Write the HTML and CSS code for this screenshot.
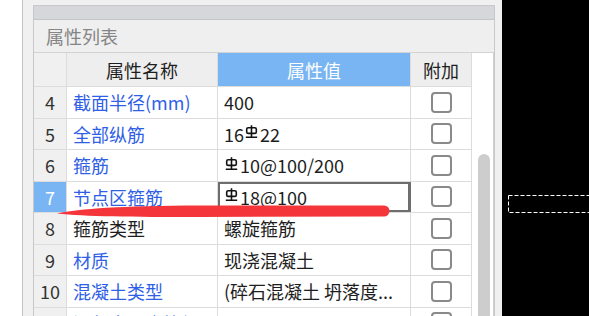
FILE: index.html
```html
<!DOCTYPE html>
<html>
<head>
    <link rel="stylesheet" href="styles.css">
</head>
<body>
    <div class="screen">
        <div class="gap-left"></div>
        <div class="dock">
            <div class="panel">
                <div class="panel-bar"></div>
                <div class="panel-title">属性列表</div>
                <div class="panel-body">
                    <div class="grid">
                        <div class="row head">
                            <div class="cell num"></div>
                            <div class="cell center">属性名称</div>
                            <div class="cell center active">属性值</div>
                            <div class="cell center">附加</div>
                        </div>
                        <div class="row">
                            <div class="cell num">4</div>
                            <div class="cell name link">截面半径(mm)</div>
                            <div class="cell value">400</div>
                            <div class="cell check"><span class="box"></span></div>
                        </div>
                        <div class="row">
                            <div class="cell num">5</div>
                            <div class="cell name link">全部纵筋</div>
                            <div class="cell value">16<svg class="steel" viewBox="0 0 13 13"><path d="M6.5 0.3V12.3M0.8 12.2H12.2"/><rect x="1.7" y="2.8" width="9.6" height="5.6" rx="1.5"/></svg>22</div>
                            <div class="cell check"><span class="box"></span></div>
                        </div>
                        <div class="row">
                            <div class="cell num">6</div>
                            <div class="cell name link">箍筋</div>
                            <div class="cell value"><svg class="steel" viewBox="0 0 13 13"><path d="M6.5 0.3V12.3M0.8 12.2H12.2"/><rect x="1.7" y="2.8" width="9.6" height="5.6" rx="1.5"/></svg>10@100/200</div>
                            <div class="cell check"><span class="box"></span></div>
                        </div>
                        <div class="row">
                            <div class="cell num current">7</div>
                            <div class="cell name link">节点区箍筋</div>
                            <div class="cell value selected"><svg class="steel" viewBox="0 0 13 13"><path d="M6.5 0.3V12.3M0.8 12.2H12.2"/><rect x="1.7" y="2.8" width="9.6" height="5.6" rx="1.5"/></svg>18@100</div>
                            <div class="cell check"><span class="box"></span></div>
                        </div>
                        <div class="row">
                            <div class="cell num">8</div>
                            <div class="cell name">箍筋类型</div>
                            <div class="cell value">螺旋箍筋</div>
                            <div class="cell check"><span class="box"></span></div>
                        </div>
                        <div class="row">
                            <div class="cell num">9</div>
                            <div class="cell name link">材质</div>
                            <div class="cell value">现浇混凝土</div>
                            <div class="cell check"><span class="box"></span></div>
                        </div>
                        <div class="row">
                            <div class="cell num">10</div>
                            <div class="cell name link">混凝土类型</div>
                            <div class="cell value">(碎石混凝土 坍落度...</div>
                            <div class="cell check"><span class="box"></span></div>
                        </div>
                        <div class="row">
                            <div class="cell num">11</div>
                            <div class="cell name link">混凝土强度等级</div>
                            <div class="cell value"></div>
                            <div class="cell check"><span class="box"></span></div>
                        </div>
                    </div>
                    <div class="scroll"><div class="thumb"></div></div>
                </div>
            </div>
        </div>
        <div class="canvas">
            <svg class="selection" width="87" height="316"><rect x="6.5" y="195.5" width="120" height="17"/></svg>
        </div>
        <svg class="mark" width="589" height="316"><path d="M57 213.5C80 208.5 120 206 200 205.5L384 205.5A5.5 5.5 0 0 1 384 216.5L200 217C130 217 85 216.5 57 213.5Z"/></svg>
    </div>
</body>
</html>
```
FILE: styles.css
```css
body {
    margin: 0;
    font-family: "Noto Sans CJK SC", "Noto Sans", sans-serif;
    background-color: white;
}

.screen {
    display: flex;
    height: 316px;
    overflow: hidden;
    position: relative;
}

.gap-left {
    width: 22px;
    background-color: white;
    border-right: 1px solid #c4c4c4;
}

.dock {
    width: 462px;
    padding: 5px 7px 0 10px;
    background-color: #f0f0f0;
}

.panel {
    border: 1px solid #c8c8c8;
    border-bottom: none;
    height: 100%;
    background-color: white;
}

.panel-bar {
    height: 13px;
    background-color: #d6d7da;
    border-bottom: 1px solid #c3c4c7;
}

.panel-title {
    height: 32px;
    line-height: 32px;
    padding-left: 12px;
    font-size: 18px;
    color: #858585;
    background-color: #efefef;
    border-bottom: 1px solid #d3d3d3;
}

.panel-body {
    display: flex;
}

.grid {
    width: 438px;
}

.row {
    display: grid;
    grid-template-columns: 33px 151px 193px 61px;
    height: 31.5px;
    box-sizing: border-box;
    border-bottom: 1px solid #dcdcdc;
}

.row.head {
    height: 34px;
    background-color: #eeeeee;
    color: #444;
}

.cell {
    display: flex;
    align-items: center;
    box-sizing: border-box;
    border-right: 1px solid #dcdcdc;
    font-size: 18px;
    color: #1e1e1e;
    white-space: nowrap;
    overflow: hidden;
}

.cell.center {
    justify-content: center;
}

.cell.active {
    background-color: #79b5f2;
    color: white;
}

.cell.num {
    justify-content: center;
    background-color: #f0f0f0;
    color: #333;
}

.cell.num.current {
    background-color: #79b5f2;
    color: white;
}

.cell.name,
.cell.value {
    padding-left: 6px;
}

.cell.link {
    color: #2f5fe6;
}

.cell.selected {
    box-shadow: inset 0 0 0 2px #6e6e6e;
    border-right-color: #6e6e6e;
}

.steel {
    width: 13px;
    height: 13px;
    margin: 0 2px 0 1px;
    position: relative;
    top: -2px;
    fill: none;
    stroke: #111;
    stroke-width: 1.6;
}

.cell.check {
    justify-content: center;
}

.box {
    width: 17px;
    height: 17px;
    border: 2px solid #8a8a8a;
    border-radius: 4px;
    background-color: white;
}

.scroll {
    width: 22px;
    height: 300px;
    background-color: white;
    border-right: 1px solid #d0d0d0;
    box-sizing: border-box;
}

.thumb {
    width: 12px;
    height: 200px;
    margin: 101px 0 0 6px;
    background-color: #cdcdcd;
    border-radius: 6px 6px 0 0;
}

.canvas {
    flex: 1;
    background-color: black;
    position: relative;
}

.selection {
    position: absolute;
    left: 0;
    top: 0;
    fill: none;
    stroke: white;
    stroke-width: 1;
    stroke-dasharray: 4 2;
}

.mark {
    position: absolute;
    left: 0;
    top: 0;
    pointer-events: none;
    fill: #f4363a;
}
```
